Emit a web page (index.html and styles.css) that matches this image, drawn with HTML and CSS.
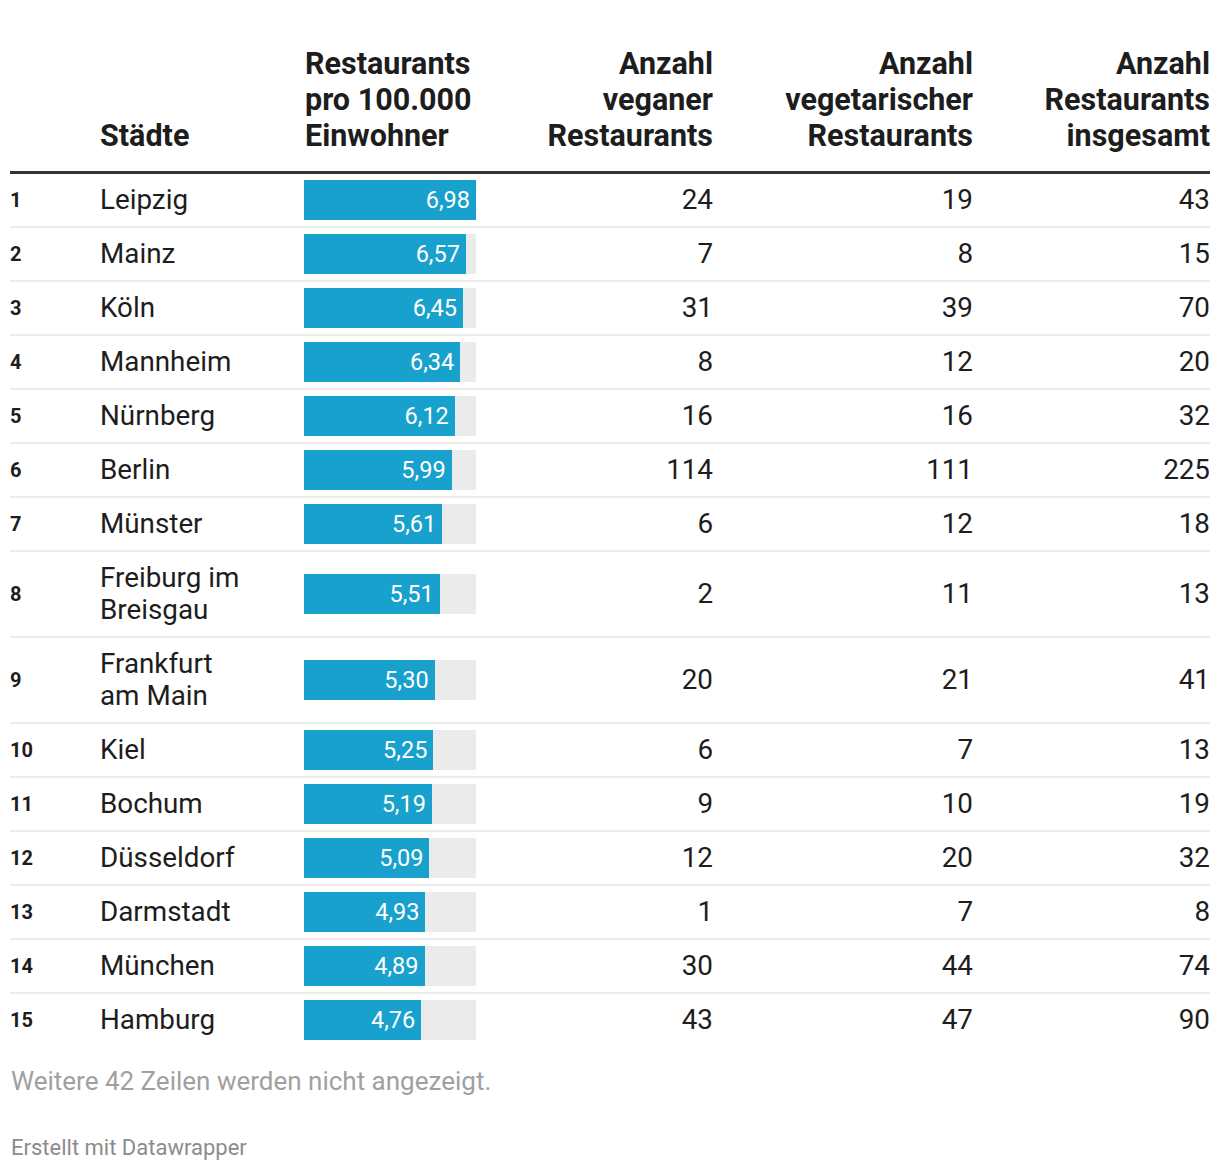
FILE: index.html
```html
<!DOCTYPE html>
<html lang="de">
<head>
<meta charset="utf-8">
<title>Restaurants pro 100.000 Einwohner</title>
<link rel="stylesheet" href="styles.css">
</head>
<body>
<div class="chart">
  <div class="table">
    <div class="row head">
      <div class="c-rank"></div>
      <div class="c-city">Städte</div>
      <div class="c-bar">Restaurants<br>pro 100.000<br>Einwohner</div>
      <div class="c-num">Anzahl<br>veganer<br>Restaurants</div>
      <div class="c-num">Anzahl<br>vegetarischer<br>Restaurants</div>
      <div class="c-num">Anzahl<br>Restaurants<br>insgesamt</div>
    </div>
    <div class="row"><div class="c-rank">1</div><div class="c-city">Leipzig</div><div class="c-bar"><div class="track"><div class="fill" style="width:100%">6,98</div></div></div><div class="c-num">24</div><div class="c-num">19</div><div class="c-num">43</div></div>
    <div class="row"><div class="c-rank">2</div><div class="c-city">Mainz</div><div class="c-bar"><div class="track"><div class="fill" style="width:94.13%">6,57</div></div></div><div class="c-num">7</div><div class="c-num">8</div><div class="c-num">15</div></div>
    <div class="row"><div class="c-rank">3</div><div class="c-city">Köln</div><div class="c-bar"><div class="track"><div class="fill" style="width:92.41%">6,45</div></div></div><div class="c-num">31</div><div class="c-num">39</div><div class="c-num">70</div></div>
    <div class="row"><div class="c-rank">4</div><div class="c-city">Mannheim</div><div class="c-bar"><div class="track"><div class="fill" style="width:90.83%">6,34</div></div></div><div class="c-num">8</div><div class="c-num">12</div><div class="c-num">20</div></div>
    <div class="row"><div class="c-rank">5</div><div class="c-city">Nürnberg</div><div class="c-bar"><div class="track"><div class="fill" style="width:87.68%">6,12</div></div></div><div class="c-num">16</div><div class="c-num">16</div><div class="c-num">32</div></div>
    <div class="row"><div class="c-rank">6</div><div class="c-city">Berlin</div><div class="c-bar"><div class="track"><div class="fill" style="width:85.82%">5,99</div></div></div><div class="c-num">114</div><div class="c-num">111</div><div class="c-num">225</div></div>
    <div class="row"><div class="c-rank">7</div><div class="c-city">Münster</div><div class="c-bar"><div class="track"><div class="fill" style="width:80.37%">5,61</div></div></div><div class="c-num">6</div><div class="c-num">12</div><div class="c-num">18</div></div>
    <div class="row"><div class="c-rank">8</div><div class="c-city">Freiburg im<br>Breisgau</div><div class="c-bar"><div class="track"><div class="fill" style="width:78.94%">5,51</div></div></div><div class="c-num">2</div><div class="c-num">11</div><div class="c-num">13</div></div>
    <div class="row"><div class="c-rank">9</div><div class="c-city">Frankfurt<br>am Main</div><div class="c-bar"><div class="track"><div class="fill" style="width:75.93%">5,30</div></div></div><div class="c-num">20</div><div class="c-num">21</div><div class="c-num">41</div></div>
    <div class="row"><div class="c-rank">10</div><div class="c-city">Kiel</div><div class="c-bar"><div class="track"><div class="fill" style="width:75.21%">5,25</div></div></div><div class="c-num">6</div><div class="c-num">7</div><div class="c-num">13</div></div>
    <div class="row"><div class="c-rank">11</div><div class="c-city">Bochum</div><div class="c-bar"><div class="track"><div class="fill" style="width:74.36%">5,19</div></div></div><div class="c-num">9</div><div class="c-num">10</div><div class="c-num">19</div></div>
    <div class="row"><div class="c-rank">12</div><div class="c-city">Düsseldorf</div><div class="c-bar"><div class="track"><div class="fill" style="width:72.92%">5,09</div></div></div><div class="c-num">12</div><div class="c-num">20</div><div class="c-num">32</div></div>
    <div class="row"><div class="c-rank">13</div><div class="c-city">Darmstadt</div><div class="c-bar"><div class="track"><div class="fill" style="width:70.63%">4,93</div></div></div><div class="c-num">1</div><div class="c-num">7</div><div class="c-num">8</div></div>
    <div class="row"><div class="c-rank">14</div><div class="c-city">München</div><div class="c-bar"><div class="track"><div class="fill" style="width:70.06%">4,89</div></div></div><div class="c-num">30</div><div class="c-num">44</div><div class="c-num">74</div></div>
    <div class="row last"><div class="c-rank">15</div><div class="c-city">Hamburg</div><div class="c-bar"><div class="track"><div class="fill" style="width:68.19%">4,76</div></div></div><div class="c-num">43</div><div class="c-num">47</div><div class="c-num">90</div></div>
  </div>
  <p class="more">Weitere 42 Zeilen werden nicht angezeigt.</p>
  <p class="credit">Erstellt mit Datawrapper</p>
</div>
</body>
</html>
```
FILE: styles.css
```css
* { box-sizing: border-box; }
html, body { margin: 0; padding: 0; background: #fff; }
body {
  font-family: Roboto, "Liberation Sans", sans-serif;
  color: #1d1d1d;
}
.chart {
  padding: 46px 10px 0 10px;
}
.table {
  display: flex;
  flex-direction: column;
}
.row {
  display: grid;
  grid-template-columns: 90px 204px 172px 237px 260px 237px;
  align-items: center;
  font-size: 27.8px;
  line-height: 32px;
  border-bottom: 2px solid #ececec;
}
.row > div { padding: 10px 0; }
.row > .c-bar { padding: 0; }
.row.last { border-bottom: none; }
.row.head {
  align-items: end;
  font-weight: 700;
  font-size: 30.5px;
  line-height: 36px;
  padding: 0 0 17px 0;
  border-bottom: 3px solid #333;
}
.row.head > div { padding: 0; }
.c-rank {
  font-size: 20px;
  font-weight: 700;
  padding-left: 1px;
}
.c-num { text-align: right; }
.row.head .c-bar { padding-left: 1px; }
.track {
  height: 40px;
  background: #ebebeb;
}
.fill {
  height: 100%;
  background: #18a1cd;
  color: #fff;
  font-size: 23.5px;
  line-height: 40px;
  text-align: right;
  padding-right: 6px;
}
.more {
  margin: 20px 0 0 1px;
  font-size: 26px;
  line-height: 30px;
  color: #a0a0a0;
}
.credit {
  margin: 39px 0 0 1px;
  font-size: 22px;
  line-height: 26px;
  color: #8c8c8c;
}
```
